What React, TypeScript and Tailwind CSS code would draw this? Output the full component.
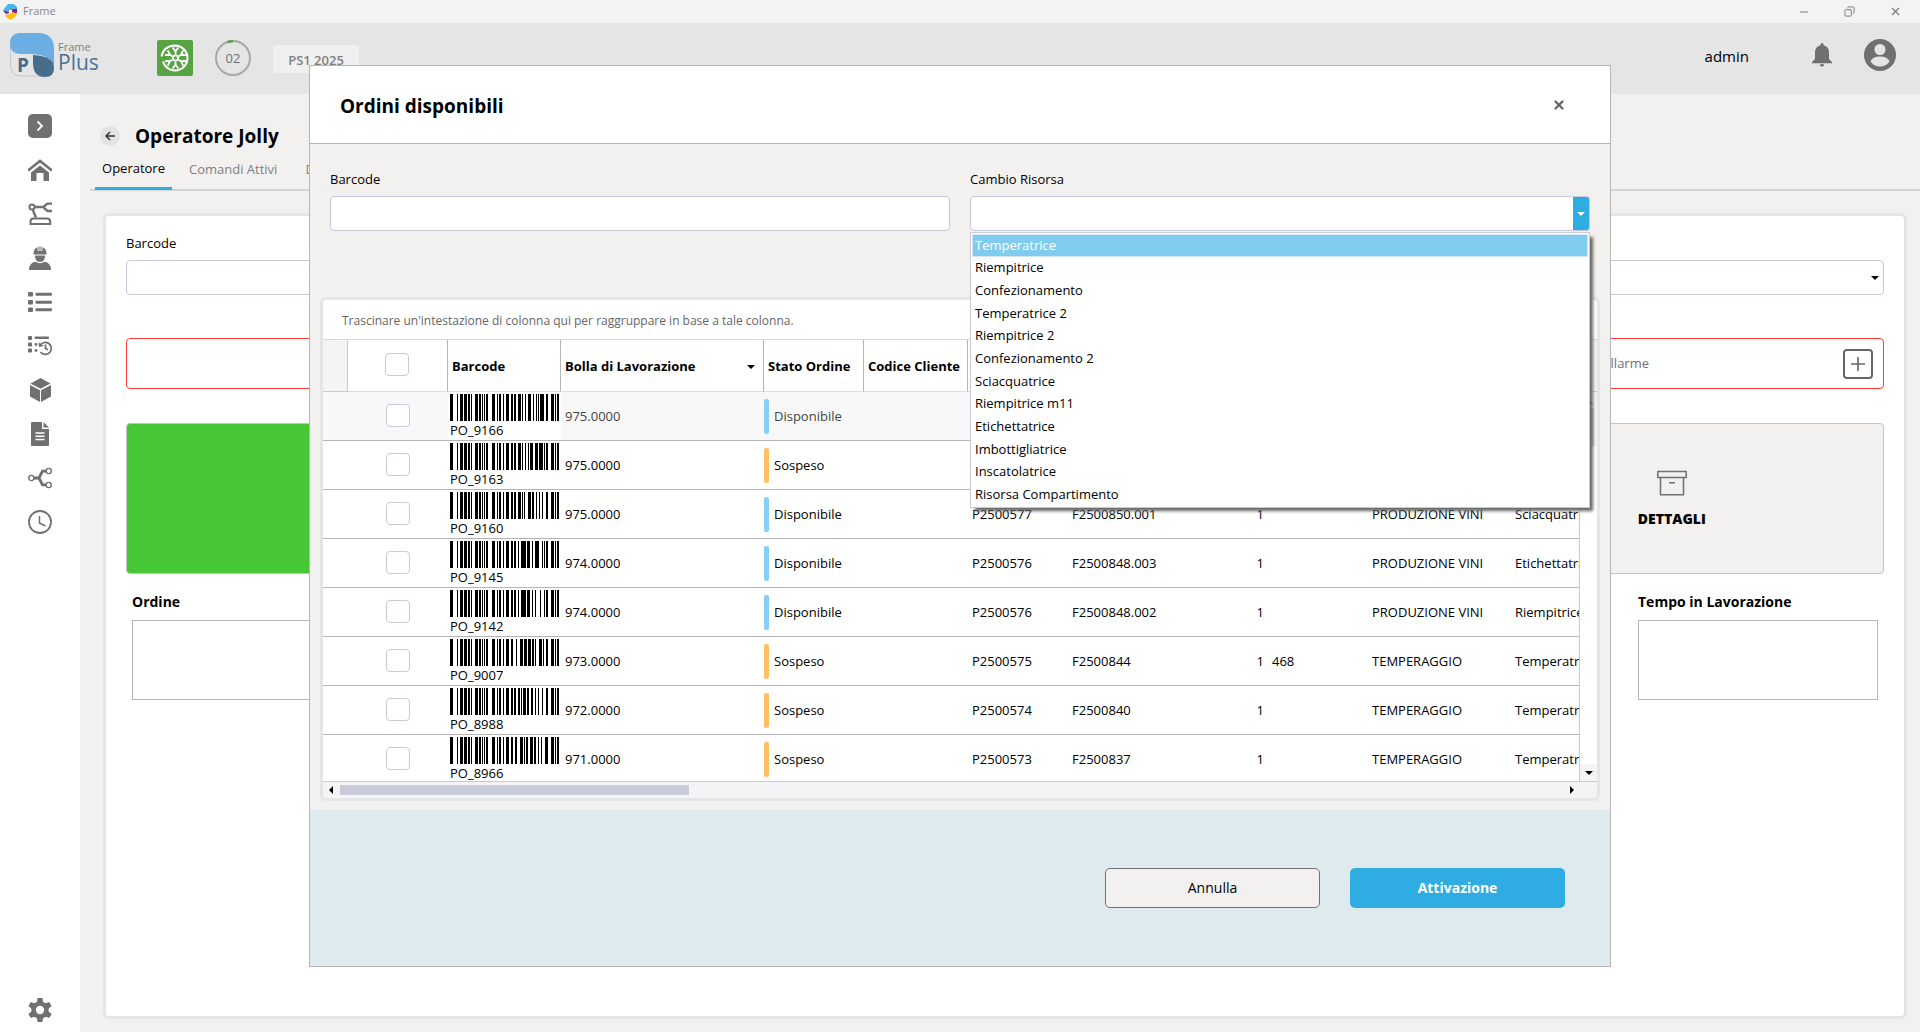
import React from "react";
import { X, Minus, Copy } from "lucide-react";

type Bars = string;

// Digits alternate between the width of a bar and the width of the gap after it.
const HEAD = "34123131211331211111243211221232";
const TAIL = "31112";

type Row = {
  code: string;
  bars: Bars;
  bolla: string;
  stato: "Disponibile" | "Sospeso";
  prod: string;
  fase: string;
  qta: string;
  note: string;
  ciclo: string;
  risorsa: string;
};

const rows: Row[] = [
  { code: "PO_9166", bars: "2122311212321211114223", bolla: "975.0000", stato: "Disponibile", prod: "P2500577", fase: "F2500850.003", qta: "1", note: "", ciclo: "PRODUZIONE VINI", risorsa: "Etichettatrice" },
  { code: "PO_9163", bars: "2122311212113231411123", bolla: "975.0000", stato: "Sospeso", prod: "P2500577", fase: "F2500850.002", qta: "1", note: "", ciclo: "PRODUZIONE VINI", risorsa: "Riempitrice" },
  { code: "PO_9160", bars: "2122311113312212121323", bolla: "975.0000", stato: "Disponibile", prod: "P2500577", fase: "F2500850.001", qta: "1", note: "", ciclo: "PRODUZIONE VINI", risorsa: "Sciacquatrice" },
  { code: "PO_9145", bars: "21221251321243111123", bolla: "974.0000", stato: "Disponibile", prod: "P2500576", fase: "F2500848.003", qta: "1", note: "", ciclo: "PRODUZIONE VINI", risorsa: "Etichettatrice" },
  { code: "PO_9142", bars: "21221251321214131123", bolla: "974.0000", stato: "Disponibile", prod: "P2500576", fase: "F2500848.002", qta: "1", note: "", ciclo: "PRODUZIONE VINI", risorsa: "Riempitrice" },
  { code: "PO_9007", bars: "23133131312113311223", bolla: "973.0000", stato: "Sospeso", prod: "P2500575", fase: "F2500844", qta: "1", note: "468", ciclo: "TEMPERAGGIO", risorsa: "Temperatrice" },
  { code: "PO_8988", bars: "2122211131222212131323", bolla: "972.0000", stato: "Sospeso", prod: "P2500574", fase: "F2500840", qta: "1", note: "", ciclo: "TEMPERAGGIO", risorsa: "Temperatrice" },
  { code: "PO_8966", bars: "22233111223122121333", bolla: "971.0000", stato: "Sospeso", prod: "P2500573", fase: "F2500837", qta: "1", note: "", ciclo: "TEMPERAGGIO", risorsa: "Temperatrice" },
];

const risorse = [
  "Temperatrice",
  "Riempitrice",
  "Confezionamento",
  "Temperatrice 2",
  "Riempitrice 2",
  "Confezionamento 2",
  "Sciacquatrice",
  "Riempitrice m11",
  "Etichettatrice",
  "Imbottigliatrice",
  "Inscatolatrice",
  "Risorsa Compartimento",
];

function Barcode({ bars }: { bars: Bars }) {
  const rects: React.ReactElement[] = [];
  const all = HEAD + bars + TAIL;
  let x = 0;
  for (let i = 0; i < all.length; i += 1) {
    const w = Number(all[i]);
    if (i % 2 === 0) rects.push(<rect key={i} x={x} y={0} width={w} height={27} />);
    x += w;
  }
  return (
    <svg className="block h-[27px] w-[109px]" viewBox="0 0 109 27" shapeRendering="crispEdges" aria-hidden="true">
      {rects}
    </svg>
  );
}

function Caret({ className, dir = "down" }: { className: string; dir?: "down" | "up" | "left" | "right" }) {
  const d = { down: "M0 2h8L4 6z", up: "M0 6h8L4 2z", left: "M6 0v8L2 4z", right: "M2 0v8l4-4z" }[dir];
  return (
    <svg className={className} viewBox="0 0 8 8" fill="currentColor" aria-hidden="true">
      <path d={d} />
    </svg>
  );
}

const sidebarIcons: { label: string; icon: React.ReactElement }[] = [
  {
    label: "Espandi menu",
    icon: (
      <>
        <rect width="24" height="24" rx="5" fill="#707070" />
        <path d="M9.5 7.5 14 12l-4.5 4.5" fill="none" stroke="#fff" strokeWidth="1.8" />
      </>
    ),
  },
  {
    label: "Home",
    icon: (
      <>
        <path d="M0 12.6 12 3l12 9.600" fill="none" stroke="#707070" strokeWidth="2.600" />
        <path d="M3 14.500 12 7.500l9 7V23h-5.500v-8h-7v8H3z" fill="#707070" />
      </>
    ),
  },
  {
    label: "Macchine",
    icon: (
      <g fill="none" stroke="#707070" strokeWidth="2">
        <circle cx="4" cy="5" r="2.600" />
        <path d="M6.500 5H14M4.800 8 8 15.500" strokeWidth="2.400" />
        <path d="M24 1.600h-4.500L15 5l4.500 4h4.500" strokeWidth="2.400" />
        <path d="M2.500 22v-2.500q0-3 3-3H19q3.200 0 3.200 3V22z" />
      </g>
    ),
  },
  {
    label: "Operatori",
    icon: (
      <g fill="#707070">
        <path d="M5.500 8.500V7q.5-4.500 4-5.800V5h1V.6h1V5h1V.6h1V5h1V1.200q3.500 1.300 4 5.800v1.500H5z" />
        <path d="M7 9.500h10q.2 6.500-5 6.500t-5-6.500z" />
        <path d="M1 24q0-7.500 7-8.300 4 3 8 0 7 .8 7 8.300z" />
      </g>
    ),
  },
  {
    label: "Elenco",
    icon: (
      <g fill="#707070">
        <rect y="2" width="5" height="4.500" rx="1" />
        <rect y="10" width="5" height="4.500" rx="1" />
        <rect y="17.500" width="5" height="4.500" rx="1" />
        <rect x="7.500" y="2.700" width="16.500" height="3" rx="1" />
        <rect x="7.500" y="10.700" width="16.500" height="3" rx="1" />
        <rect x="7.500" y="18.200" width="16.500" height="3" rx="1" />
      </g>
    ),
  },
  {
    label: "Storico",
    icon: (
      <>
        <g fill="#707070">
          <rect y="2" width="4" height="4" rx="1" />
          <rect y="8.500" width="4" height="4" rx="1" />
          <rect y="14.500" width="4" height="4" rx="1" />
          <rect x="6.500" y="2.500" width="14.500" height="2.500" rx="1" />
          <circle cx="8" cy="10.500" r="1.400" />
          <circle cx="8" cy="16.500" r="1.400" />
          <path d="M10.500 8.500 16 12l-5 1z" />
        </g>
        <path d="M12 11.500a6 6 0 1 1 .5 6.500M17.500 10.500v4l2.500 1.300" fill="none" stroke="#707070" strokeWidth="1.700" />
      </>
    ),
  },
  {
    label: "Materiali",
    icon: (
      <g fill="#707070">
        <path d="M12.500 0 22.500 5.500 12.500 10.800 2.500 5.500z" />
        <path d="M2 7l10 5.300V24L2 18.500zM23 7l-10 5.300V24l10-5.500z" />
      </g>
    ),
  },
  {
    label: "Documenti",
    icon: (
      <>
        <path d="M3 1q0-1 1-1h10v7h7v16q0 1-1 1H4q-1 0-1-1z" fill="#707070" />
        <path d="M15.500 0 21 5.500h-5.500z" fill="#707070" />
        <path d="M7.500 11h9M7.500 14.200h9M7.500 17.500h9" stroke="#fff" strokeWidth="1.400" />
      </>
    ),
  },
  {
    label: "Flussi",
    icon: (
      <>
        <path d="M6 12h5l3.500-6.800h3.800M11 12l3.500 6.800h3.800" fill="none" stroke="#707070" strokeWidth="2.800" />
        <g fill="#fff" stroke="#707070" strokeWidth="1.400">
          <circle cx="3.300" cy="12" r="2.600" />
          <circle cx="20.700" cy="5" r="2.600" />
          <circle cx="20.700" cy="19" r="2.600" />
        </g>
      </>
    ),
  },
  {
    label: "Orari",
    icon: (
      <g fill="none" stroke="#707070">
        <circle cx="12" cy="12" r="11" strokeWidth="1.800" />
        <path d="M11.500 6v7l6 3" strokeWidth="1.500" />
      </g>
    ),
  },
];

function Sidebar() {
  return (
    <nav aria-label="Navigazione" className="flex w-20 shrink-0 flex-col items-center bg-white pt-5 pb-2.5">
      <div className="flex flex-col gap-5">
        {sidebarIcons.map((item) => (
          <button key={item.label} type="button" aria-label={item.label} className="size-6">
            <svg className="size-6" viewBox="0 0 24 24" aria-hidden="true">
              {item.icon}
            </svg>
          </button>
        ))}
      </div>
      <button type="button" aria-label="Impostazioni" className="mt-auto size-6">
        <svg className="size-6" viewBox="0 0 24 24" aria-hidden="true">
          <g fill="#707070">
            <circle cx="12" cy="12" r="8.700" />
            {[0, 60, 120, 180, 240, 300].map((a) => (
              <path key={a} d="M8.800 5 9.600 0h4.800l.8 5z" transform={`rotate(${a} 12 12)`} />
            ))}
          </g>
          <circle cx="12" cy="12" r="4.200" fill="#fff" />
        </svg>
      </button>
    </nav>
  );
}

function TitleBar() {
  return (
    <div className="flex h-[23px] shrink-0 items-center bg-[#f3f3f3] pl-[3px] text-[#8a8a8a]">
      <svg className="size-4" viewBox="0 0 16 16" aria-hidden="true">
        <path d="M0 6 5 0h6l3 3v3l-3-1-5 3-4 1z" fill="#4db4e8" />
        <path d="M0 6.500 6 8l4-3h4v4l-3 1-2-2-6 2z" fill="#8b1a8c" />
        <path d="M2 11 6 10l4-2 4 2-2 3-4 3-4-2z" fill="#fcc015" />
        <rect x="6" y="6" width="3" height="3" fill="#fff" />
      </svg>
      <span className="ml-1 text-[11px]">Frame</span>
      <div className="ml-auto flex items-center gap-[34px] pr-[18px] text-[#777]">
        <button type="button" aria-label="Riduci a icona"><Minus className="size-3" strokeWidth={2} /></button>
        <button type="button" aria-label="Ripristina"><Copy className="size-[11px] -scale-x-100" strokeWidth={2} /></button>
        <button type="button" aria-label="Chiudi finestra"><X className="size-[13px]" strokeWidth={2} /></button>
      </div>
    </div>
  );
}

function Header() {
  return (
    <header className="flex h-[71px] shrink-0 items-start bg-[#e5e5e5] pr-6 pl-2.5">
      <div className="mt-2.5 flex w-[147px] items-start">
        <svg className="h-11 w-11 shrink-0" viewBox="0 0 44 44" aria-hidden="true">
          <path d="M.5 12v20q0 11 11 11h21" fill="none" stroke="#c3c9ce" />
          <path d="M10 0h18q16 0 16 16v18Q42 22 22 21H10Q0 21 0 10.500T10 0z" fill="#6aaee3" />
          <path d="M23 22q21 1 21 13 0 9-9 9-12 0-12-14z" fill="#476d8c" />
          <text x="7" y="39" fontFamily="Open Sans, sans-serif" fontWeight="700" fontSize="19" fill="#476d8c">P</text>
        </svg>
        <div className="ml-1 pt-2 leading-none">
          <div className="text-[11px] leading-3 text-[#7d7d7d]">Frame</div>
          <div className="text-[21px] leading-[18px] text-[#4a7393]">Plus</div>
        </div>
      </div>
      <svg className="mt-[17px] size-9 shrink-0" viewBox="0 0 36 36" aria-hidden="true">
        <rect width="36" height="36" rx="2" fill="#57a344" />
        <g fill="none" stroke="#fff" strokeWidth="2">
          <path d="M4.500 16.500Q6.500 6 18 5.500a12.500 12.500 0 1 1-12 16" />
          <circle cx="18.500" cy="18" r="2.600" strokeWidth="1.800" />
          {[0, 60, 120, 180, 240, 300].map((a) => (
            <path key={a} d="M18.500 14.500V11.500l-2.800-4M18.500 11.500l2.800-4" strokeWidth="1.800" transform={`rotate(${a} 18.500 18)`} />
          ))}
        </g>
      </svg>
      <div className="mt-[17px] ml-[22px] grid size-9 shrink-0 place-items-center">
        <svg className="col-start-1 row-start-1 size-9" viewBox="0 0 36 36" fill="none" strokeWidth="2" aria-hidden="true">
          <circle cx="18" cy="18" r="17" stroke="#a8a8a8" />
          <path d="M12.500 2.200Q15 1.300 18 1.300" stroke="#57a344" strokeWidth="2.600" />
        </svg>
        <span className="col-start-1 row-start-1 pt-px text-[13px] text-[#707070]">02</span>
      </div>
      <div className="mt-[22px] ml-[22px] flex h-7 w-[86px] items-center justify-center rounded-sm bg-[#f0f0f0] pt-1 text-[13px] font-semibold text-[#808080]">
        PS1 2025
      </div>
      <div className="ml-auto flex items-center pt-4">
        <span className="pt-0.5 text-[15px] leading-5">admin</span>
        <button type="button" aria-label="Notifiche" className="ml-[61px]">
          <svg className="h-6 w-6" viewBox="0 0 24 24" fill="#707070" aria-hidden="true">
            <path d="M12 0q1.600 0 1.600 2.200Q19 3.600 19 9.500V16l3 3v1.300H2V19l3-3V9.500q0-5.900 5.400-7.300Q10.400 0 12 0zM9.800 21.300h4.400q0 2.400-2.200 2.400t-2.200-2.400z" />
          </svg>
        </button>
        <button type="button" aria-label="Profilo" className="ml-[30px]">
          <svg className="size-8" viewBox="0 0 32 32" aria-hidden="true">
            <circle cx="16" cy="16" r="16" fill="#707070" />
            <circle cx="16" cy="10.500" r="5.500" fill="#e5e5e5" />
            <path d="M6.500 22.500q2-5 9.500-5t9.500 5q-3.500 5-9.500 5t-9.500-5z" fill="#e5e5e5" />
          </svg>
        </button>
      </div>
    </header>
  );
}

function OperatorPage() {
  return (
    <main className="flex min-w-0 flex-1 flex-col bg-[#f3f1f0] pb-[13px]">
      <div className="mt-7 ml-5 flex items-center gap-[15px]">
        <button type="button" aria-label="Indietro" className="grid size-5 place-items-center rounded-full bg-[#e3e3e3]">
          <svg className="size-2.5" viewBox="0 0 10 10" fill="none" stroke="#333" strokeWidth="1.500" aria-hidden="true">
            <path d="M10 5H1M5 1 1 5l4 4" />
          </svg>
        </button>
        <h1 className="text-[19px] leading-7 font-bold">Operatore Jolly</h1>
      </div>
      <div role="tablist" className="mt-[7px] ml-2.5 flex h-[34px] items-start border-b-2 border-[#d4d4d4] pl-[5px] text-[13px] text-[#808080]">
        <button type="button" role="tab" aria-selected="true" className="h-[33px] w-[77px] border-b-3 border-[#2fade3] pb-1.5 text-black">Operatore</button>
        <button type="button" role="tab" aria-selected="false" className="h-[33px] pb-2 pl-[17px] whitespace-nowrap">Comandi Attivi</button>
        <button type="button" role="tab" aria-selected="false" className="h-[33px] pb-2 pl-7">Dettagli</button>
      </div>
      <section className="mt-[22px] mr-[13px] ml-[23px] flex-1 rounded-md border-3 border-[#e5e5e5] bg-white px-5 pt-[17px]">
        <div className="grid grid-cols-2 gap-x-5 text-[13px]">
          <div>
            <label htmlFor="op-barcode" className="block leading-5">Barcode</label>
            <input id="op-barcode" type="text" className="mt-[7px] h-[35px] w-full rounded border border-[#c9c9dc] bg-white px-2" />
          </div>
          <div>
            <label htmlFor="op-risorsa" className="block leading-5">Risorsa</label>
            <div className="mt-[7px] grid h-[35px] items-center">
              <select id="op-risorsa" defaultValue="" className="col-start-1 row-start-1 h-[35px] w-full appearance-none rounded border border-[#c9c9dc] bg-white px-2">
                <option value=""></option>
              </select>
              <Caret className="pointer-events-none col-start-1 row-start-1 mr-[5px] size-2 justify-self-end" />
            </div>
          </div>
        </div>
        <div className="mt-[43px] flex h-[51px] items-center justify-end rounded border border-[#ff3b3b] pr-2.5 text-[13px] text-[#707070]">
          <span className="mr-[194px]">Allarme</span>
          <button type="button" aria-label="Aggiungi allarme" className="grid size-[30px] place-items-center rounded border-2 border-[#666]">
            <svg className="size-3.5" viewBox="0 0 14 14" stroke="#666" strokeWidth="1.600" aria-hidden="true">
              <path d="M7 0v14M0 7h14" />
            </svg>
          </button>
        </div>
        <div className="mt-[34px] grid h-[151px] grid-cols-4 gap-5">
          <button type="button" aria-label="Avvia" className="rounded border border-[#c4c4c4] bg-[#48c736]" />
          <button type="button" aria-label="Pausa" className="rounded border border-[#c4c4c4] bg-[#f2f1ef]" />
          <button type="button" aria-label="Chiudi ordine" className="rounded border border-[#c4c4c4] bg-[#f2f1ef]" />
          <button type="button" className="flex flex-col items-center rounded border border-[#c4c4c4] bg-[#f2f1ef] pt-[46px] text-sm font-extrabold">
            <svg className="h-[26px] w-[30px]" viewBox="0 0 30 26" fill="none" stroke="#707070" strokeWidth="1.500" aria-hidden="true">
              <path d="M.8 1.500h28.400v6H.8zM3.500 7.500v17.300h23V7.500M12 12.800h6" />
            </svg>
            <span className="mt-[13px] leading-5">DETTAGLI</span>
          </button>
        </div>
        <div className="mt-[18px] flex justify-between px-1.5">
          <div className="w-[240px]">
            <label htmlFor="op-ordine" className="block text-sm leading-5 font-bold">Ordine</label>
            <input id="op-ordine" readOnly className="mt-2 block h-20 w-full border border-[#b5b5b5]" />
          </div>
          <div className="w-[240px]">
            <label htmlFor="op-tempo" className="block text-sm leading-5 font-bold">Tempo in Lavorazione</label>
            <input id="op-tempo" readOnly className="mt-2 block h-20 w-full border border-[#b5b5b5]" />
          </div>
        </div>
      </section>
    </main>
  );
}

const checkboxClass = "mx-auto block h-[23px] w-6 appearance-none rounded border border-[#c9c9dc] bg-white checked:bg-[#2fade3]";

function OrdersTable() {
  return (
    <div className="mt-[66px] -mr-2.5 -ml-2.5 flex min-h-0 flex-1 flex-col overflow-hidden rounded-md border-3 border-[#e5e5e5] bg-white">
      <div className="h-10 shrink-0 border-b border-[#d9d9e3] pl-[19px] text-xs leading-[42px] text-[#666]">
        Trascinare un'intestazione di colonna qui per raggruppare in base a tale colonna.
      </div>
      <div className="flex min-h-0 flex-1">
        <div className="min-w-0 flex-1 overflow-hidden border-r border-[#c9c9dc]">
          <table className="w-full min-w-[1257px] table-fixed border-separate border-spacing-0 text-[13px]">
            <colgroup>
              <col className="w-[25px]" />
              <col className="w-[100px]" />
              <col className="w-[113px]" />
              <col className="w-[203px]" />
              <col className="w-[100px]" />
              <col className="w-[104px]" />
              <col className="w-[100px]" />
              <col className="w-[100px]" />
              <col className="w-[100px]" />
              <col className="w-[100px]" />
              <col className="w-[143px]" />
              <col />
            </colgroup>
            <thead>
              <tr className="h-[52px] text-left whitespace-nowrap">
                <td className="border-r border-b border-[#c9c9dc] bg-[#f4f4f7]" />
                <th className="border-r border-b border-r-[#b5b5b5] border-b-[#dcdcdc] pr-0.5 pb-0.5">
                  <input type="checkbox" aria-label="Seleziona tutti" className={checkboxClass} />
                </th>
                <th className="border-r border-b border-r-[#b5b5b5] border-b-[#dcdcdc] pt-0.5 pl-1 font-bold">Barcode</th>
                <th className="border-r border-b border-r-[#b5b5b5] border-b-[#dcdcdc] pt-0.5 pr-2 pl-1 font-bold">
                  <span className="flex items-center justify-between">
                    Bolla di Lavorazione
                    <Caret className="size-2" />
                  </span>
                </th>
                <th className="border-r border-b border-r-[#b5b5b5] border-b-[#dcdcdc] pt-0.5 pl-1 font-bold">Stato Ordine</th>
                <th className="border-r border-b border-r-[#b5b5b5] border-b-[#dcdcdc] pt-0.5 pl-1 font-bold">Codice Cliente</th>
                <td className="border-b border-[#dcdcdc]" colSpan={6} />
              </tr>
            </thead>
            <tbody>
              {rows.map((r, i) => (
                <tr
                  key={r.code}
                  className={
                    "h-[49px] whitespace-nowrap [&>td]:border-b [&>td]:border-[#b5b5b5] " +
                    (i === 0 ? "bg-[#f8f8f8] text-[#444]" : "")
                  }
                >
                  <td />
                  <td className="pb-px">
                    <input type="checkbox" aria-label={`Seleziona ${r.code}`} className={checkboxClass} />
                  </td>
                  <td className="bg-white pl-0.5 text-black">
                    <div className="h-12 pt-0.5">
                      <Barcode bars={r.bars} />
                      <span className="block leading-[18px]">{r.code}</span>
                    </div>
                  </td>
                  <td className="pt-px pl-1">{r.bolla}</td>
                  <td>
                    <div className="flex items-center gap-[5px]">
                      <span className={"h-[35px] w-[5px] rounded-xs " + (r.stato === "Disponibile" ? "bg-[#87cefa]" : "bg-[#ffc061]")} />
                      <span className="pt-px">{r.stato}</span>
                    </div>
                  </td>
                  <td />
                  <td className="pt-px pl-1">{r.prod}</td>
                  <td className="pt-px pl-1">{r.fase}</td>
                  <td className="pt-px pr-1 text-right">{r.qta}</td>
                  <td className="pt-px pl-1">{r.note}</td>
                  <td className="pt-px pl-1">{r.ciclo}</td>
                  <td className="overflow-hidden pt-px pl-1">{r.risorsa}</td>
                </tr>
              ))}
            </tbody>
          </table>
        </div>
        <div className="flex w-[17px] shrink-0 flex-col items-center">
          <div className="h-[52px] w-full shrink-0 border-b border-[#c9c9dc] bg-[#f4f4f7]" />
          <div className="flex w-full flex-col items-center bg-[#f4f4f7]">
            <Caret dir="up" className="mt-1.5 mb-0.5 size-2" />
            <div className="h-[38px] w-2.5 bg-[#c9c9dc]" />
          </div>
          <div className="mt-auto flex h-[17px] w-full items-center justify-center bg-[#f4f4f7]">
            <Caret className="size-2" />
          </div>
        </div>
      </div>
      <div className="flex h-[17px] shrink-0 items-center border-t border-[#c9c9dc] bg-[#f4f4f7] pr-[21px] pl-1">
        <Caret dir="left" className="size-2" />
        <div className="ml-[5px] h-2.5 w-[349px] bg-[#c9cbdb]" />
        <Caret dir="right" className="ml-auto size-2" />
      </div>
    </div>
  );
}

function OrdersDialog() {
  return (
    <div className="fixed inset-0 flex px-[309px] py-[65px]">
      <div role="dialog" aria-labelledby="dialog-title" className="flex min-w-0 flex-1 flex-col border border-[#b5b5b5] bg-[#f2f1ef]">
        <div className="flex h-[78px] shrink-0 items-center justify-between border-b border-[#b5b5b5] bg-white pr-11 pl-[30px]">
          <h2 id="dialog-title" className="pt-0.5 text-[19px] leading-7 font-bold">Ordini disponibili</h2>
          <button type="button" aria-label="Chiudi">
            <X className="size-3.5" color="#666" strokeWidth={4} />
          </button>
        </div>
        <div className="flex min-h-0 flex-1 flex-col px-5 pt-[25px] pb-[9px]">
          <div className="grid grid-cols-2 gap-x-5 text-[13px]">
            <div>
              <label htmlFor="barcode" className="block leading-5">Barcode</label>
              <input id="barcode" type="text" className="mt-[7px] block h-[35px] w-full rounded border border-[#c9c9dc] bg-white px-2" />
            </div>
            <div className="relative">
              <label htmlFor="cambio" className="block leading-5">Cambio Risorsa</label>
              <div className="mt-[7px] grid h-[35px]">
                <select id="cambio" defaultValue="" className="col-start-1 row-start-1 h-[35px] w-full appearance-none rounded border border-[#c9c9dc] bg-white px-2">
                  <option value=""></option>
                </select>
                <span className="pointer-events-none col-start-1 row-start-1 grid w-[17px] place-items-center justify-self-end rounded-r border-y border-r border-[#c9c9dc] bg-[#2fade3] text-white">
                  <Caret className="size-2" />
                </span>
              </div>
              <ul
                role="listbox"
                aria-label="Cambio Risorsa"
                className="absolute top-full left-0 z-10 mt-px grid h-[276px] w-full grid-rows-12 border border-[#c9c9dc] bg-white p-px shadow-[4px_4px_3px_-1px_#666]"
              >
                {risorse.map((r, i) => (
                  <li
                    key={r}
                    role="option"
                    aria-selected={i === 0}
                    className={"flex items-center border px-0.5 " + (i === 0 ? "border-[#d5e6f2] bg-[#7fccee] text-white" : "border-transparent")}
                  >
                    {r}
                  </li>
                ))}
              </ul>
            </div>
          </div>
          <OrdersTable />
        </div>
        <div className="flex h-[156px] shrink-0 items-center justify-end gap-[30px] bg-[#dfeaef] pr-[45px] text-sm">
          <button type="button" className="h-10 w-[215px] rounded-[5px] border border-[#707078] bg-[#f3f1f0]">Annulla</button>
          <button type="button" className="h-10 w-[215px] rounded-[5px] bg-[#2fade3] font-bold text-white">Attivazione</button>
        </div>
      </div>
    </div>
  );
}

export default function App() {
  return (
    <div className="flex min-h-screen flex-col bg-[#f3f1f0] font-['Open_Sans',sans-serif] text-black">
      <TitleBar />
      <Header />
      <div className="flex flex-1">
        <Sidebar />
        <OperatorPage />
      </div>
      <OrdersDialog />
    </div>
  );
}
